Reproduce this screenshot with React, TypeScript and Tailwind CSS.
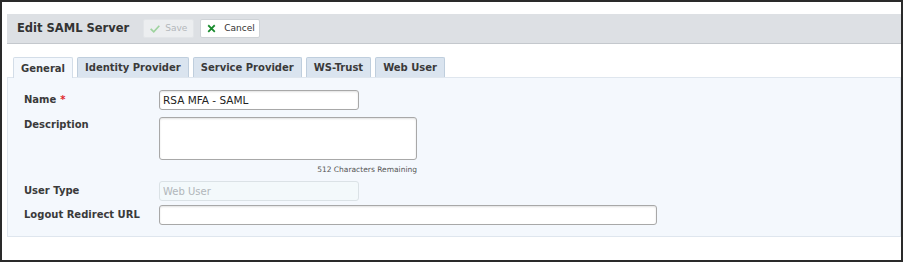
import React from 'react';

const TABS = ['General', 'Identity Provider', 'Service Provider', 'WS-Trust', 'Web User'];

function CheckIcon({ className }: { className?: string }) {
  return (
    <svg viewBox="0 0 12 12" className={className} fill="none">
      <path d="M1.5 6.5 L4.5 9.3 L10.5 2.8" stroke="currentColor" strokeWidth="2" strokeLinecap="square" />
    </svg>
  );
}

function TimesIcon({ className }: { className?: string }) {
  return (
    <svg viewBox="0 0 12 12" className={className} fill="none">
      <path d="M2.5 2.5 L9.5 9.5 M9.5 2.5 L2.5 9.5" stroke="currentColor" strokeWidth="2.4" strokeLinecap="square" />
    </svg>
  );
}

function FieldRow({ label, required, children, top }: { label: string; required?: boolean; children: React.ReactNode; top?: boolean }) {
  return (
    <div className={top ? 'flex items-start' : 'flex items-center'}>
      <div className={'w-[135px] shrink-0 text-[10px] font-bold text-[#3a3a3a] leading-[14px] ' + (top ? 'pt-[1px]' : '')}>
        {label}
        {required && <span className="ml-[4px] text-[#e0262b]">*</span>}
      </div>
      {children}
    </div>
  );
}

const inputCls =
  'h-[20px] rounded-[3px] border border-[#a8a8a8] bg-white px-[3px] text-[10.5px] text-[#222] shadow-[inset_0_1px_2px_rgba(0,0,0,0.12)] outline-none';

export default function App() {
  return (
    <div className="w-[903px] h-[262px] overflow-hidden border-2 border-[#2a2a2a] bg-white font-['DejaVu_Sans',sans-serif]">
      <div className="pl-[5px] pt-[12px]">
        {/* header */}
        <div className="flex h-[30px] items-center border-b border-[#c4c8cd] bg-[#dde0e4] pl-[10px]">
          <h1 className="text-[11.5px] font-bold text-[#333]">Edit SAML Server</h1>
          <button
            disabled
            className="ml-[14px] flex h-[19px] w-[51px] items-center gap-[5px] rounded-[2px] border border-[#e2e5e8] bg-[#eceef0] pl-[6px] text-[9px] text-[#b3b7bb]"
          >
            <CheckIcon className="h-[10px] w-[10px] text-[#9ed39e]" />
            Save
          </button>
          <button className="ml-[6px] flex h-[19px] w-[60px] items-center gap-[8px] rounded-[2px] border border-[#cfd3d7] bg-white pl-[6px] text-[9px] text-[#333]">
            <TimesIcon className="h-[9px] w-[9px] text-[#178a2c]" />
            Cancel
          </button>
        </div>

        {/* tabs */}
        <div className="mt-[13px] flex items-end gap-[4px] pl-[6px]">
          {TABS.map((t, i) => (
            <div
              key={t}
              className={
                i === 0
                  ? 'relative -mb-px flex h-[21px] items-center rounded-t-[2px] border border-b-0 border-[#d3dde8] bg-[#f4f8fd] px-[7px] text-[10px] font-bold text-[#3a3a3a]'
                  : 'flex h-[20px] items-center rounded-t-[2px] border border-b-0 border-[#bfcedd] bg-[#dae4ef] px-[7px] text-[10px] font-bold text-[#3a3a3a]'
              }
            >
              {t}
            </div>
          ))}
        </div>

        {/* panel */}
        <div className="h-[160px] border border-[#dfe6ee] bg-[#f4f8fd] pl-[16px] pt-[12px]">
          <FieldRow label="Name" required>
            <input readOnly defaultValue="RSA MFA - SAML" className={inputCls + ' w-[200px]'} />
          </FieldRow>

          <div className="mt-[7px]">
            <FieldRow label="Description" top>
              <textarea
                readOnly
                className="h-[43px] w-[258px] resize-none rounded-[3px] border border-[#a8a8a8] bg-white shadow-[inset_0_1px_2px_rgba(0,0,0,0.12)] outline-none"
              />
            </FieldRow>
          </div>

          <div className="mt-[5px] w-[393px] text-right text-[7.5px] leading-[10px] text-[#555]">512 Characters Remaining</div>

          <div className="mt-[6px]">
            <FieldRow label="User Type">
              <input
                readOnly
                disabled
                placeholder="Web User"
                className="h-[20px] w-[200px] rounded-[3px] border border-[#dbe2e6] bg-[#f3f9fb] px-[3px] text-[10px] text-[#aab0b4] placeholder:text-[#b1b6ba] outline-none"
              />
            </FieldRow>
          </div>

          <div className="mt-[4px]">
            <FieldRow label="Logout Redirect URL">
              <input readOnly defaultValue="" className={inputCls + ' w-[498px]'} />
            </FieldRow>
          </div>
        </div>
      </div>
    </div>
  );
}
